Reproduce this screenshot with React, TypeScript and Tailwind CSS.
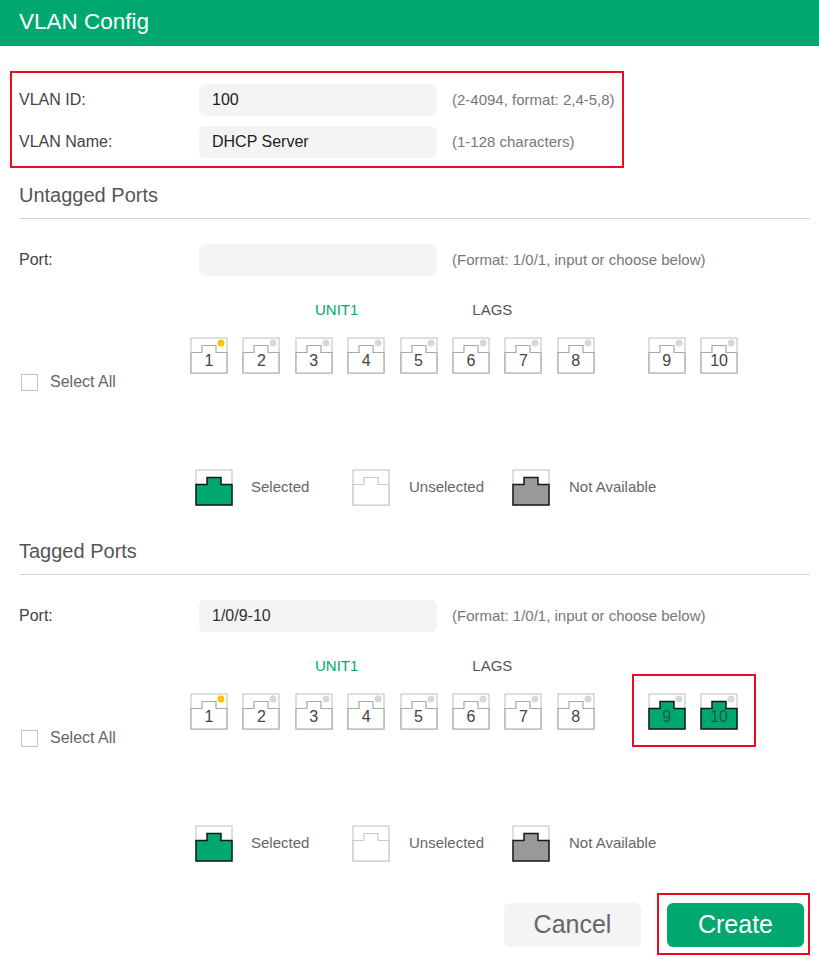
import React from 'react'

type PortState = 'selected' | 'unselected' | 'unavailable'

const SHAPE = 'M1 36V15.5H12V8.5H26V15.5H37V36Z'

const PortIcon = ({ state, dot }: { state: PortState; dot?: string }) => {
    const fill = state === 'selected' ? '#00a870' : state === 'unavailable' ? '#999999' : '#ffffff'
    // real ports draw a slightly darker outline than the legend swatch
    const plain = dot ? '#a8a8a8' : '#c8c8c8'
    const stroke = state === 'selected' ? '#111a17' : state === 'unavailable' ? '#1a1a1a' : plain
    return (
        <svg width="38" height="37" viewBox="0 0 38 37" className="block">
            <rect x="1" y="1" width="36" height="35" fill="#fff" stroke="#c8c8c8" strokeWidth="1.2" />
            <path d={SHAPE} fill={fill} stroke={stroke} strokeWidth={state === 'unselected' ? 1.2 : 1.5} />
            {dot && <circle cx="31" cy="6" r="3.5" fill={dot} />}
        </svg>
    )
}

const Port = ({ n, selected, active }: { n: number; selected?: boolean; active?: boolean }) => (
    <div className="relative w-[38px] h-[37px]">
        <PortIcon state={selected ? 'selected' : 'unselected'} dot={active ? '#fcc400' : '#d8d8d8'} />
        <span className={'absolute left-0 right-0 top-[14px] text-center text-base leading-[20px] ' + (selected ? 'text-[#1f5a45]' : 'text-[#444]')}>
            {n}
        </span>
    </div>
)

const Legend = ({ state, label, className }: { state: PortState; label: string; className: string }) => (
    <div className={'flex items-center ' + className}>
        <PortIcon state={state} />
        <span className="ml-[18px] text-[15px] text-[#666]">{label}</span>
    </div>
)

const Section = ({ title, value, tagged }: { title: string; value: string; tagged?: boolean }) => (
    <div className="pl-[19px] pb-[31px]">
        <div className="h-[38px] mr-[9px] border-b border-[#d4d4d4] text-[20px] leading-[28px] text-[#555]">{title}</div>

        <div className="mt-[25px] flex items-center h-8">
            <div className="w-[180px] text-base text-[#444]">Port:</div>
            <div className="w-[238px] h-8 rounded-md bg-[#f4f4f4] px-[13px] text-base leading-8 text-[#333]">{value}</div>
            <div className="ml-[15px] text-[15px] text-[#777]">(Format: 1/0/1, input or choose below)</div>
        </div>

        <div className="mt-[25px] flex h-[18px] text-[15px] leading-[18px]">
            <span className="ml-[296px] text-[#00a870]">UNIT1</span>
            <span className="ml-[114px] text-[#555]">LAGS</span>
        </div>

        <div className="mt-[18px] flex">
            <label className="w-[171px] mt-[35px] h-5 flex items-center">
                <span className="ml-[2px] w-[17px] h-[17px] border border-[#c4c4c4] bg-white" />
                <span className="ml-[12px] text-base text-[#666]">Select All</span>
            </label>
            <div className="flex gap-[14.4px]">
                {[1, 2, 3, 4, 5, 6, 7, 8].map((n) => (
                    <Port key={n} n={n} active={n === 1} />
                ))}
            </div>
            <div className="relative ml-[53px] flex gap-[14.4px]">
                <Port n={9} selected={tagged} />
                <Port n={10} selected={tagged} />
                {tagged && (
                    <div className="absolute -left-4 -top-[19px] w-[124px] h-[73px] border-2 border-[#f00a1e]" />
                )}
            </div>
        </div>

        <div className="mt-[77px] flex">
            <Legend state="selected" label="Selected" className="ml-[176px] w-[157px]" />
            <Legend state="unselected" label="Unselected" className="w-[160px] [&>span]:ml-[19px]" />
            <Legend state="unavailable" label="Not Available" className="[&>span]:ml-[19px]" />
        </div>
    </div>
)

export default function App() {
    return (
        <div className="w-[819px] h-[965px] bg-white overflow-hidden font-['Liberation_Sans',Arial,sans-serif]">
            <div className="h-[46px] bg-[#00a870] pl-[19px] text-[22.5px] leading-[43px] text-white">VLAN Config</div>

            <div className="mt-[25px] ml-[10px] w-[614px] h-[97px] border-2 border-[#f00a1e] pl-[7px] pt-[11px] flex flex-col gap-[10px]">
                <div className="flex items-center h-8">
                    <div className="w-[180px] text-base text-[#444]">VLAN ID:</div>
                    <div className="w-[238px] h-8 rounded-md bg-[#f4f4f4] px-[13px] text-base leading-8 text-[#222]">100</div>
                    <div className="ml-[15px] text-[15px] text-[#777]">(2-4094, format: 2,4-5,8)</div>
                </div>
                <div className="flex items-center h-8">
                    <div className="w-[180px] text-base text-[#444]">VLAN Name:</div>
                    <div className="w-[238px] h-8 rounded-md bg-[#f4f4f4] px-[13px] text-base leading-8 text-[#222]">DHCP Server</div>
                    <div className="ml-[15px] text-[15px] text-[#777]">(1-128 characters)</div>
                </div>
            </div>

            <div className="mt-[13px]">
                <Section title="Untagged Ports" value="" />
                <Section title="Tagged Ports" value="1/0/9-10" tagged />
            </div>

            <div className="flex justify-end items-start pr-[9px]">
                <button className="mt-[10px] w-[137px] h-[44px] rounded-md bg-[#f4f4f4] text-[25px] text-[#666]">Cancel</button>
                <div className="ml-4 w-[153px] h-[62px] border-2 border-[#f00a1e] pl-2 pt-2">
                    <button className="w-[137px] h-[44px] rounded-md bg-[#00a870] text-[25px] text-white">Create</button>
                </div>
            </div>
        </div>
    )
}
